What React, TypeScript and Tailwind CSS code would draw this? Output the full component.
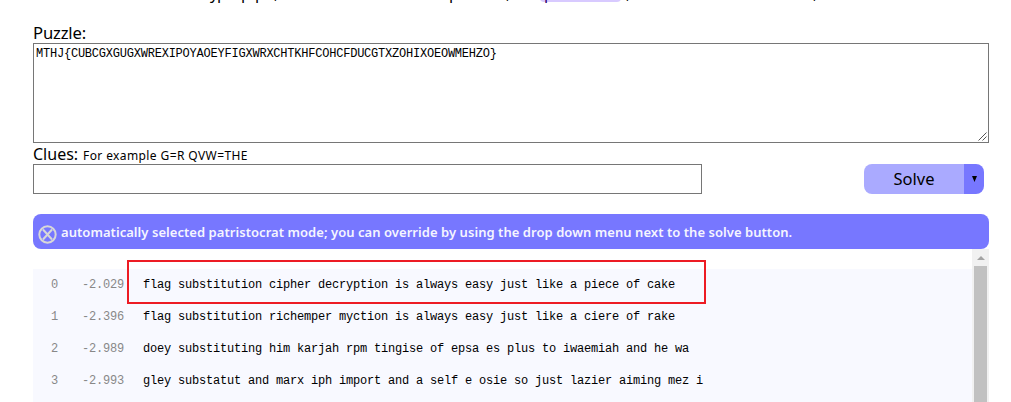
const results = [
  { n: 0, score: "-2.029", text: "flag substitution cipher decryption is always easy just like a piece of cake" },
  { n: 1, score: "-2.396", text: "flag substitution richemper myction is always easy just like a ciere of rake" },
  { n: 2, score: "-2.989", text: "doey substituting him karjah rpm tingise of epsa es plus to iwaemiah and he wa" },
  { n: 3, score: "-2.993", text: "gley substatut and marx iph import and a self e osie so just lazier aiming mez i" },
];

export default function App() {
  return (
    <div className="relative h-[402px] w-[1011px] overflow-hidden bg-white pl-[33px] pr-[22px] font-['Noto_Sans',sans-serif] text-black">
      <div className="relative h-[23px] text-[16px] leading-[20px]">
        <span className="absolute -top-[18px] left-[507px] h-[20px] w-[81px] rounded bg-[#d8caff]" />
        <span className="absolute -top-[17px] left-[177px]">y</span>
        <span className="absolute -top-[17px] left-[184px]">p</span>
        <span className="absolute -top-[17px] left-[208px]">p</span>
        <span className="absolute -top-[17px] left-[222px]">p</span>
        <span className="absolute -top-[17px] left-[241px]">,</span>
        <span className="absolute -top-[17px] left-[416px]">p</span>
        <span className="absolute -top-[17px] left-[473px]">,</span>
        <span className="absolute -top-[17px] left-[511px] text-[#30006a]">p</span>
        <span className="absolute -top-[17px] left-[593px]">,</span>
        <span className="absolute -top-[17px] left-[780px]">,</span>
      </div>
      <div className="h-[20px] text-[16px] leading-[20px]"><span className="inline-block origin-left scale-x-[1.04] tracking-[-0.15px]">Puzzle:</span></div>
      <div className="relative h-[100px] w-[956px] border border-[#767676] px-[2px] pt-[3px] font-['Liberation_Mono',monospace] text-[12px] leading-[14px] tracking-[-0.22px]">
        MTHJ&#123;CUBCGXGUGXWREXIPOYAOEYFIGXWRXCHTKHFCOHCFDUCGTXZOHIXOEOWMEHZO&#125;
        <svg className="absolute bottom-px right-px" width="9" height="9" viewBox="0 0 9 9" fill="none" stroke="#555">
          <path d="M.5 8.5l8-8M4.5 8.5l4-4" />
        </svg>
      </div>
      <div className="flex h-[21px] items-baseline text-[16px] leading-[22px]">
        <span className="w-[50px]">Clues:</span>
        <span className="text-[12px] tracking-[0.4px]">For example G=R QVW=THE</span>
      </div>
      <div className="flex h-[30px]">
        <div className="w-[669px] border border-[#767676]" />
        <div className="ml-[162px] flex overflow-hidden rounded-[8px]">
          <div className="w-[100px] bg-[#aaaaff] text-center text-[16.5px] leading-[30px]">Solve</div>
          <div className="flex w-[20px] items-center justify-center bg-[#7777ff]">
            <svg width="5" height="6" viewBox="0 0 5 6"><path d="M0 0h5L2.5 6z" /></svg>
          </div>
        </div>
      </div>
      <div className="mt-[20px] flex h-[35px] w-[956px] items-center rounded-[8px] bg-[#7777ff] pl-[5px] text-[#f5f5ff]">
        <svg className="mr-[4px] mt-[6px]" width="19" height="19" viewBox="0 0 19 19" fill="none" stroke="#d8d8d8" strokeWidth="2">
          <circle cx="9.5" cy="9.5" r="8.2" />
          <path d="M5 4.5l9 10M14 4.5l-9 10" />
        </svg>
        <span className="mt-[2px] whitespace-nowrap text-[13px] font-semibold tracking-[0.05px]">automatically selected patristocrat mode; you can override by using the drop down menu next to the solve button.</span>
      </div>
      <div className="flex h-[153px] w-[956px]">
        <div className="mt-[20px] w-[939px] bg-[#f8f9ff] font-['Liberation_Mono',monospace] text-[12px] tracking-[-0.2px]">
          {results.map((r) => (
            <div key={r.n} className="flex h-[32px] whitespace-pre leading-[32px]">
              <span className="w-[49px] pl-[18px] text-[#888]">{r.n}</span>
              <span className="w-[61px] text-[#888]">{r.score}</span>
              <span>{r.text}</span>
            </div>
          ))}
        </div>
        <div className="flex w-[17px] flex-col bg-[#f1f1f1]">
          <div className="flex h-[17px] items-center justify-center">
            <svg width="8" height="4" viewBox="0 0 8 4"><path d="M0 4h8L4 0z" fill="#a3a3a3" /></svg>
          </div>
          <div className="mx-[2px] flex-1 bg-[#c1c1c1]" />
        </div>
      </div>
      <div className="absolute left-[127px] top-[260px] h-[44px] w-[579px] border-2 border-[#ed1c24]" />
    </div>
  );
}
